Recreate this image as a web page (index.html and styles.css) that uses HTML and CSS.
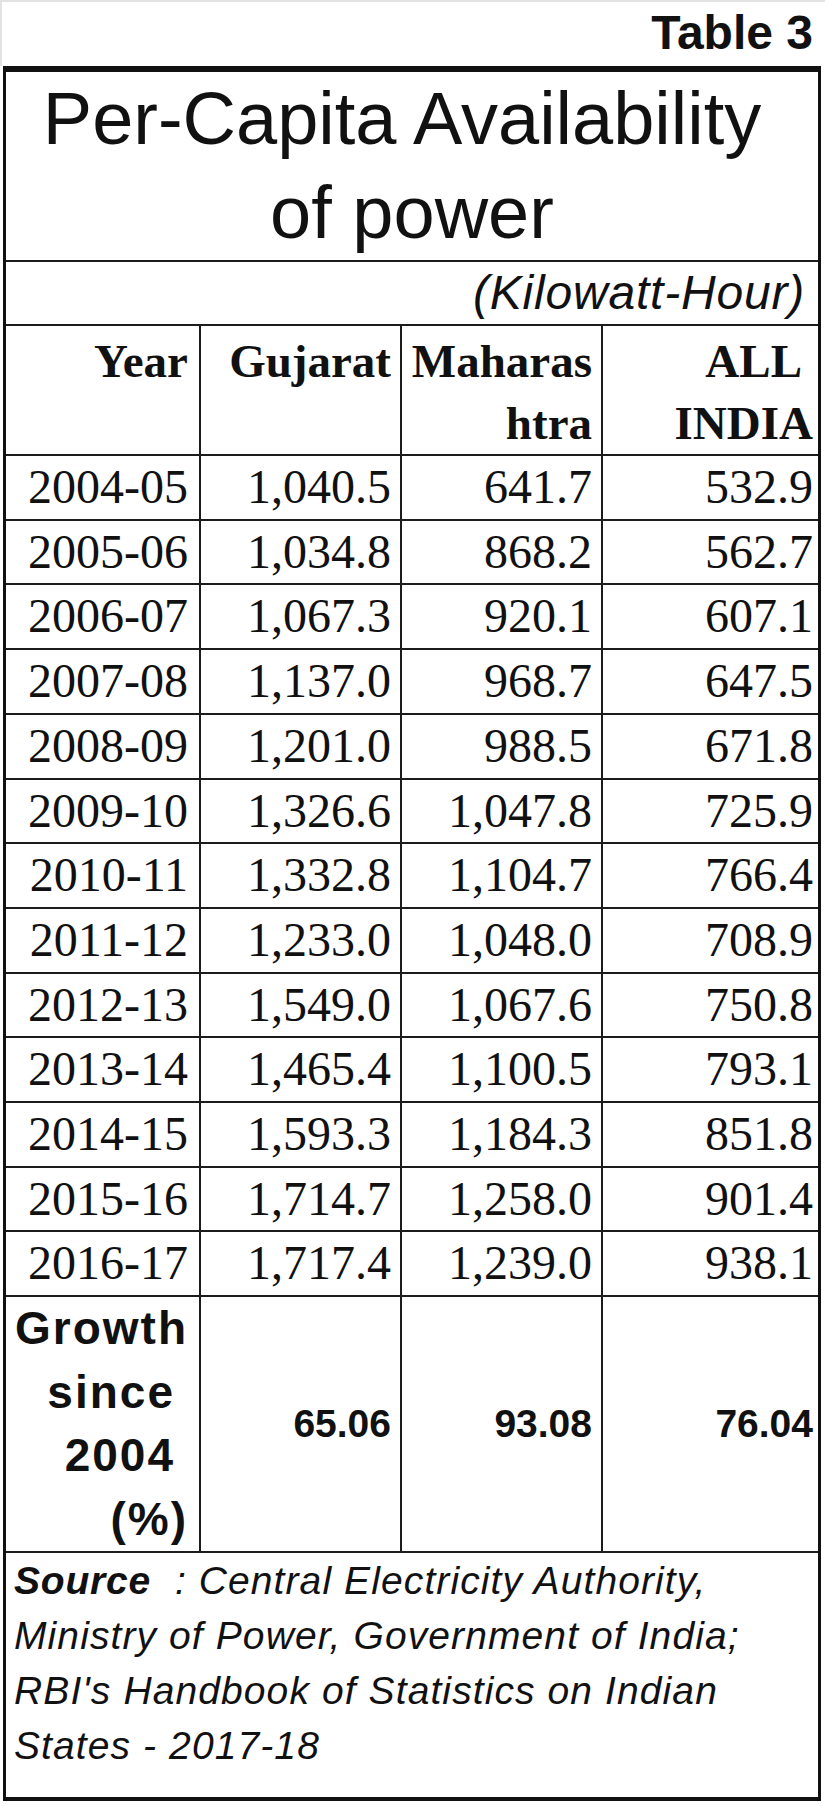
FILE: index.html
```html
<!DOCTYPE html>
<html lang="en">
<head>
<meta charset="utf-8">
<title>Table 3 - Per-Capita Availability of power</title>
<link rel="stylesheet" href="styles.css">
</head>
<body>
<div class="page">
  <div class="caption">Table 3</div>
  <table class="stats">
    <colgroup>
      <col class="c1"><col class="c2"><col class="c3"><col class="c4">
    </colgroup>
    <tr>
      <td colspan="4" class="title">Per-Capita Availability<span class="trail-title"></span><br>of power</td>
    </tr>
    <tr>
      <td colspan="4" class="unit">(Kilowatt-Hour)</td>
    </tr>
    <tr class="head">
      <th>Year</th>
      <th>Gujarat</th>
      <th>Maharas<br>htra</th>
      <th>ALL<span class="trail-head"></span><br>INDIA</th>
    </tr>
    <tr class="row"><td>2004-05</td><td>1,040.5</td><td>641.7</td><td>532.9</td></tr>
    <tr class="row"><td>2005-06</td><td>1,034.8</td><td>868.2</td><td>562.7</td></tr>
    <tr class="row"><td>2006-07</td><td>1,067.3</td><td>920.1</td><td>607.1</td></tr>
    <tr class="row"><td>2007-08</td><td>1,137.0</td><td>968.7</td><td>647.5</td></tr>
    <tr class="row"><td>2008-09</td><td>1,201.0</td><td>988.5</td><td>671.8</td></tr>
    <tr class="row"><td>2009-10</td><td>1,326.6</td><td>1,047.8</td><td>725.9</td></tr>
    <tr class="row"><td>2010-11</td><td>1,332.8</td><td>1,104.7</td><td>766.4</td></tr>
    <tr class="row"><td>2011-12</td><td>1,233.0</td><td>1,048.0</td><td>708.9</td></tr>
    <tr class="row"><td>2012-13</td><td>1,549.0</td><td>1,067.6</td><td>750.8</td></tr>
    <tr class="row"><td>2013-14</td><td>1,465.4</td><td>1,100.5</td><td>793.1</td></tr>
    <tr class="row"><td>2014-15</td><td>1,593.3</td><td>1,184.3</td><td>851.8</td></tr>
    <tr class="row"><td>2015-16</td><td>1,714.7</td><td>1,258.0</td><td>901.4</td></tr>
    <tr class="row"><td>2016-17</td><td>1,717.4</td><td>1,239.0</td><td>938.1</td></tr>
    <tr class="growth">
      <th>Growth<br>since<span class="trail-growth"></span><br>2004<span class="trail-growth"></span><br>(%)</th>
      <td>65.06</td>
      <td>93.08</td>
      <td>76.04</td>
    </tr>
    <tr>
      <td colspan="4" class="source"><b>Source</b>&nbsp; : Central Electricity Authority,<br>Ministry of Power, Government of India;<br>RBI's Handbook of Statistics on Indian<br>States - 2017-18</td>
    </tr>
  </table>
</div>
</body>
</html>
```

FILE: styles.css
```css
html, body {
  margin: 0;
  padding: 0;
  background: #ffffff;
}

.page {
  width: 825px;
  color: #111111;
}

.caption {
  height: 66px;
  box-sizing: border-box;
  border-top: 2px solid #e2e2e2;
  border-left: 2px solid #e2e2e2;
  padding-right: 12px;
  text-align: right;
  font-family: "Liberation Sans", Arial, sans-serif;
  font-weight: bold;
  font-size: 48px;
  line-height: 62px;
}

.stats {
  margin-left: 3px;
  width: 818px;
  table-layout: fixed;
  border-collapse: separate;
  border-spacing: 0;
  border-top: 6px solid #111111;
  border-bottom: 4px solid #111111;
  border-left: 3px solid #111111;
  border-right: 3px solid #111111;
}

.c1 { width: 195px; }
.c2 { width: 201px; }
.c3 { width: 201px; }
.c4 { width: 215px; }

.stats td,
.stats th {
  box-sizing: border-box;
  padding: 0;
  border-right: 2px solid #1c1c1c;
  border-bottom: 2px solid #1c1c1c;
  text-align: right;
}

.stats td:last-child,
.stats th:last-child {
  border-right: 0;
}

.stats tr:last-child td {
  border-bottom: 0;
}

.stats .title {
  text-align: center;
  font-family: "Liberation Sans", Arial, sans-serif;
  font-weight: normal;
  font-size: 74px;
  line-height: 94px;
}

.trail-title {
  display: inline-block;
  width: 20px;
}

.stats .unit {
  height: 64px;
  padding-right: 13px;
  font-family: "Liberation Sans", Arial, sans-serif;
  font-style: italic;
  font-size: 48px;
  letter-spacing: 0.8px;
  line-height: 62px;
}

.head th {
  height: 130px;
  vertical-align: top;
  padding-top: 4px;
  font-family: "Liberation Serif", "Times New Roman", serif;
  font-weight: bold;
  font-size: 47px;
  line-height: 62px;
}

.trail-head {
  display: inline-block;
  width: 11px;
}

.row td {
  height: 64.7px;
  font-family: "Liberation Serif", "Times New Roman", serif;
  font-size: 48px;
  line-height: 62.7px;
  vertical-align: middle;
}

.head > :nth-child(1), .row > :nth-child(1), .growth > :nth-child(1) { padding-right: 11px; }
.head > :nth-child(2), .row > :nth-child(2), .growth > :nth-child(2) { padding-right: 9px; }
.head > :nth-child(3), .row > :nth-child(3), .growth > :nth-child(3) { padding-right: 9px; }
.head > :nth-child(4), .row > :nth-child(4), .growth > :nth-child(4) { padding-right: 5px; }

.growth th {
  height: 256px;
  font-family: "Liberation Sans", Arial, sans-serif;
  font-weight: bold;
  font-size: 46px;
  letter-spacing: 2px;
  line-height: 63.5px;
  vertical-align: top;
}

.trail-growth {
  display: inline-block;
  width: 13px;
}

.growth td {
  font-family: "Liberation Sans", Arial, sans-serif;
  font-weight: bold;
  font-size: 39px;
  vertical-align: middle;
}

.stats .source {
  text-align: left;
  padding: 0 0 24px 8px;
  font-family: "Liberation Sans", Arial, sans-serif;
  font-style: italic;
  font-size: 39px;
  letter-spacing: 1.1px;
  line-height: 55px;
}

.source b {
  font-weight: bold;
  letter-spacing: 0.8px;
}
```
